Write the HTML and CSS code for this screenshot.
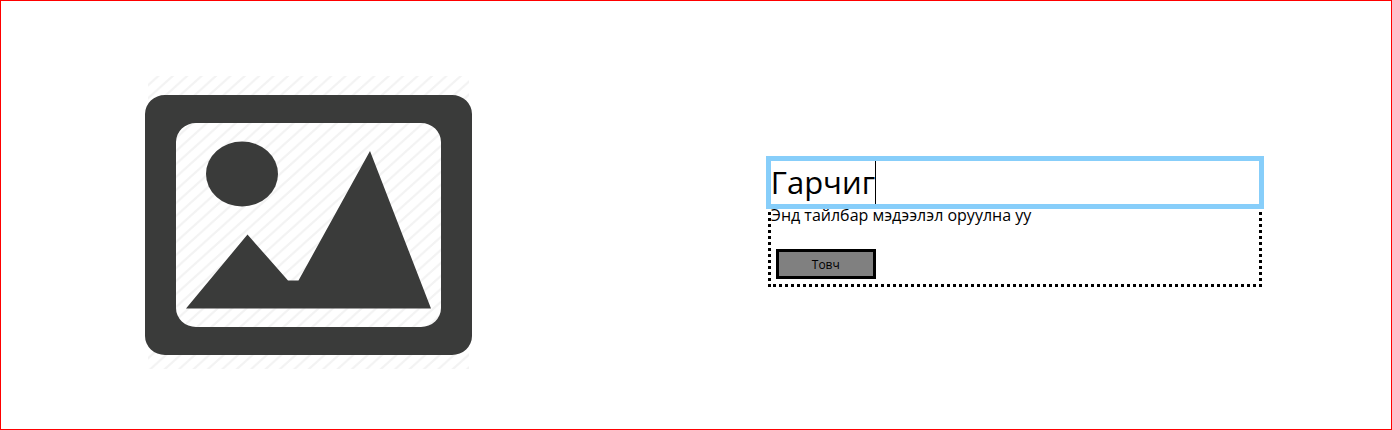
FILE: index.html
```html
<!DOCTYPE html>
<html lang="mn">
<head>
<meta charset="utf-8">
<meta name="viewport" content="width=device-width, initial-scale=1">
<title>Гарчиг</title>
<link rel="stylesheet" href="styles.css">
</head>
<body>
<main class="section">
  <figure class="media">
    <svg class="placeholder" viewBox="0 0 327 295" role="img" aria-label="Зураг">
      <defs>
        <pattern id="stripes" width="14.4" height="13" patternUnits="userSpaceOnUse">
          <path d="M-14.4 26L28.8 -13M-14.4 13L14.4 -13M0 26L28.8 0" stroke="#f3f3f3" stroke-width="2.2"/>
        </pattern>
      </defs>
      <rect x="3" y="1" width="321" height="293" fill="url(#stripes)"/>
      <path fill="#3a3b3a" fill-rule="evenodd" d="M20 20H307A20 19 0 0 1 327 39V261A20 19 0 0 1 307 280H20A20 19 0 0 1 0 261V39A20 19 0 0 1 20 20ZM51 48A20 19 0 0 0 31 67V233A20 19 0 0 0 51 252H276A20 19 0 0 0 296 233V67A20 19 0 0 0 276 48Z"/>
      <ellipse cx="97" cy="99" rx="36" ry="32.500" fill="#3a3b3a"/>
      <path fill="#3a3b3a" d="M41 233.500L102.500 159.500L143 205.500H153.500L225 76L286 233.500Z"/>
    </svg>
  </figure>
  <section class="content">
    <div class="card">
      <h1 class="title" contenteditable="true">Гарчиг<span class="caret"></span></h1>
      <p class="description">Энд тайлбар мэдээлэл оруулна уу</p>
      <button class="button" type="button">Товч</button>
    </div>
  </section>
</main>
</body>
</html>
```

FILE: styles.css
```css
* {
  box-sizing: border-box;
}

body {
  margin: 0;
  background: #fff;
  color: #000;
  font-family: "Open Sans", "Noto Sans", sans-serif;
}

.section {
  display: grid;
  grid-template-columns: 9fr 11fr;
  gap: 22px;
  align-items: center;
  min-height: 100vh;
  padding-top: 15px;
  border: 1px solid #f00;
}

.media {
  display: flex;
  justify-content: center;
  margin: 0;
}

.placeholder {
  width: 100%;
  max-width: 327px;
}

.content {
  display: flex;
  justify-content: center;
}

.card {
  width: 100%;
  max-width: 494px;
  border: 3px dotted #000;
}

.title {
  display: flex;
  margin: 0;
  font-size: 31px;
  font-weight: 400;
  line-height: 43px;
  outline: 5px solid #87cefa;
}

.caret {
  width: 1px;
  background: #000;
}

.description {
  margin: 0 0 23px;
  font-size: 16px;
  line-height: 22px;
}

.button {
  display: block;
  width: 100px;
  height: 30px;
  margin: 5px;
  padding: 0;
  border: 3px solid #000;
  background: #808080;
  color: #000;
  font-family: inherit;
  font-size: 12px;
}
```
